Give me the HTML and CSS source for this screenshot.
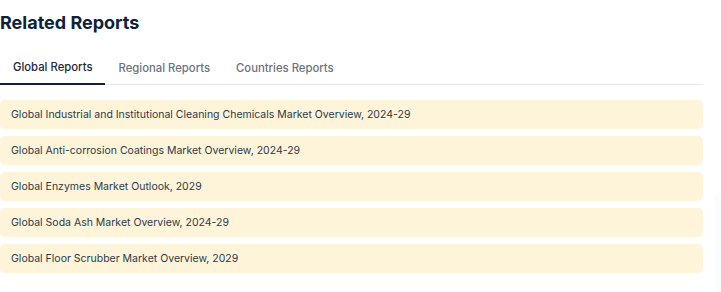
FILE: index.html
```html
<!DOCTYPE html>
<html>
<head>
<meta charset="utf-8">
<link rel="stylesheet" href="styles.css">
</head>
<body>
<div class="page">
  <section class="related">
    <h2 class="title">Related Reports</h2>
    <div class="tabs">
      <div class="tab active">Global Reports</div>
      <div class="tab">Regional Reports</div>
      <div class="tab">Countries Reports</div>
    </div>
    <ul class="list">
      <li class="item">Global Industrial and Institutional Cleaning Chemicals Market Overview, 2024-29</li>
      <li class="item">Global Anti-corrosion Coatings Market Overview, 2024-29</li>
      <li class="item">Global Enzymes Market Outlook, 2029</li>
      <li class="item">Global Soda Ash Market Overview, 2024-29</li>
      <li class="item">Global Floor Scrubber Market Overview, 2029</li>
    </ul>
  </section>
  <aside class="side"></aside>
</div>
</body>
</html>
```
FILE: styles.css
```css
* { box-sizing: border-box; }
html, body { margin: 0; padding: 0; background: #fff; }
body { font-family: Inter, "Noto Sans", sans-serif; }
.page { display: flex; width: 721px; height: 292px; overflow: hidden; }
.related { width: 703px; flex: none; }
.side { flex: none; width: 7px; margin-left: 11px; margin-top: 195px; background: #fafdfd; }
.title { margin: 0; padding-top: 12px; font-size: 18px; font-weight: 700; color: #0e2238; line-height: 22px; }
.tabs { display: flex; margin-top: 16px; border-bottom: 1px solid #e5e7eb; height: 35px; align-items: stretch; }
.tab { padding: 0 13px; font-size: 11.3px; font-weight: 500; color: #6b7280; line-height: 16px; display: flex; align-items: center; margin-bottom: -1px; }
.tab.active { color: #1f2937; border-bottom: 2px solid #0e2238; }
.list { list-style: none; margin: 15px 0 0; padding: 0; display: flex; flex-direction: column; gap: 7px; }
.item { height: 29px; background: #fef4da; border-radius: 5px; padding: 0 11px; display: flex; align-items: center; font-size: 10.5px; color: #2f3a48; }
```
